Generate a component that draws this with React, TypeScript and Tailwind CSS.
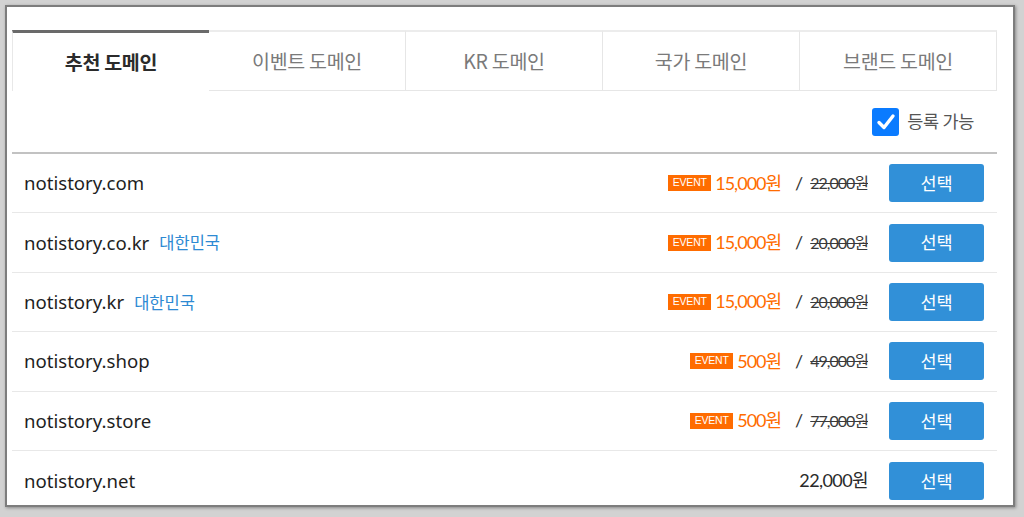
import React from "react";

const tabs = ["추천 도메인", "이벤트 도메인", "KR 도메인", "국가 도메인", "브랜드 도메인"];

type Row = { name: string; country?: string; event?: string; orig?: string; price?: string };
const rows: Row[] = [
  { name: "notistory.com", event: "15,000원", orig: "22,000원" },
  { name: "notistory.co.kr", country: "대한민국", event: "15,000원", orig: "20,000원" },
  { name: "notistory.kr", country: "대한민국", event: "15,000원", orig: "20,000원" },
  { name: "notistory.shop", event: "500원", orig: "49,000원" },
  { name: "notistory.store", event: "500원", orig: "77,000원" },
  { name: "notistory.net", price: "22,000원" },
];

const kr = { fontFamily: '"Noto Sans CJK KR", "Noto Sans", sans-serif' };
const latin = { fontFamily: '"Noto Sans", "Noto Sans CJK KR", sans-serif' };
const num = { fontFamily: 'Lato, "Noto Sans CJK KR", sans-serif' };

export default function App() {
  return (
    <div className="w-[1024px] h-[517px] bg-[#d2d2d2] pt-[5px] pl-[5px] overflow-hidden">
      <div className="w-[1010px] h-[502px] bg-white border-2 border-[#7d7d7d] shadow-[1px_1px_3px_rgba(0,0,0,0.35)] pl-[5px] pt-[23px]">
        <div className="w-[985px]">
          <div className="grid grid-cols-5 h-[61px]" style={kr}>
            {tabs.map((t, i) =>
              i === 0 ? (
                <div
                  key={t}
                  className="flex items-center justify-center border-t-[3px] border-t-[#6a6a6a] border-l border-l-[#e8e8e8] text-[19.5px] font-bold text-[#2b2b2b] tracking-[-0.3px] pb-[1px]"
                >
                  {t}
                </div>
              ) : (
                <div
                  key={t}
                  className="flex items-center justify-center border-t-[2px] border-t-[#ececec] border-r border-b border-[#e6e6e6] text-[19.5px] text-[#7a7a7a] tracking-[-0.3px]"
                >
                  {t}
                </div>
              )
            )}
          </div>
          <div className="h-[61px] flex items-center justify-end pr-[23px] gap-[8px]">
            <div className="w-[27px] h-[28px] rounded-[3px] bg-[#0a7bff] flex items-center justify-center">
              <svg width="20" height="18" viewBox="0 0 20 18">
                <path d="M3 9.5 L8 14.5 L17 3" fill="none" stroke="white" strokeWidth="3.4" strokeLinecap="round" strokeLinejoin="round" />
              </svg>
            </div>
            <span className="text-[17.5px] text-[#555] tracking-[-0.3px]" style={kr}>등록 가능</span>
          </div>
          <div className="h-[2px] bg-[#c2c2c2]" />
          {rows.map((r, i) => (
            <div
              key={r.name}
              className={`h-[59.4px] flex items-center pl-[12px] pr-[13px] ${i < rows.length - 1 ? "border-b border-[#e8e8e8]" : ""}`}
            >
              <span className="text-[18.6px] text-[#1e1e1e]" style={latin}>{r.name}</span>
              {r.country && (
                <span className="ml-[10px] text-[16.5px] text-[#2d8ad3]" style={kr}>{r.country}</span>
              )}
              <div className="ml-auto flex items-center">
                {r.event && (
                  <>
                    <span className="h-[16px] w-[43px] bg-[#ff6c00] text-white text-[10.5px] flex items-center justify-center tracking-[-0.2px]" style={{ fontFamily: '"Liberation Sans", sans-serif' }}>
                      EVENT
                    </span>
                    <span className="ml-[4px] text-[18px] text-[#ff6c00] tracking-[-1px]" style={num}>{r.event}</span>
                    <span className="ml-[14px] mr-[7px] text-[18px] text-[#333]" style={num}>/</span>
                    <span className="text-[16px] text-[#3a3a3a] line-through tracking-[-1px]" style={num}>{r.orig}</span>
                  </>
                )}
                {r.price && (
                  <span className="text-[18px] text-[#2a2a2a] tracking-[-0.6px]" style={num}>{r.price}</span>
                )}
                <button
                  className="ml-[21px] w-[95px] h-[38px] rounded-[3px] bg-[#3190d8] text-white text-[17.5px]"
                  style={kr}
                >
                  선택
                </button>
              </div>
            </div>
          ))}
        </div>
      </div>
    </div>
  );
}
